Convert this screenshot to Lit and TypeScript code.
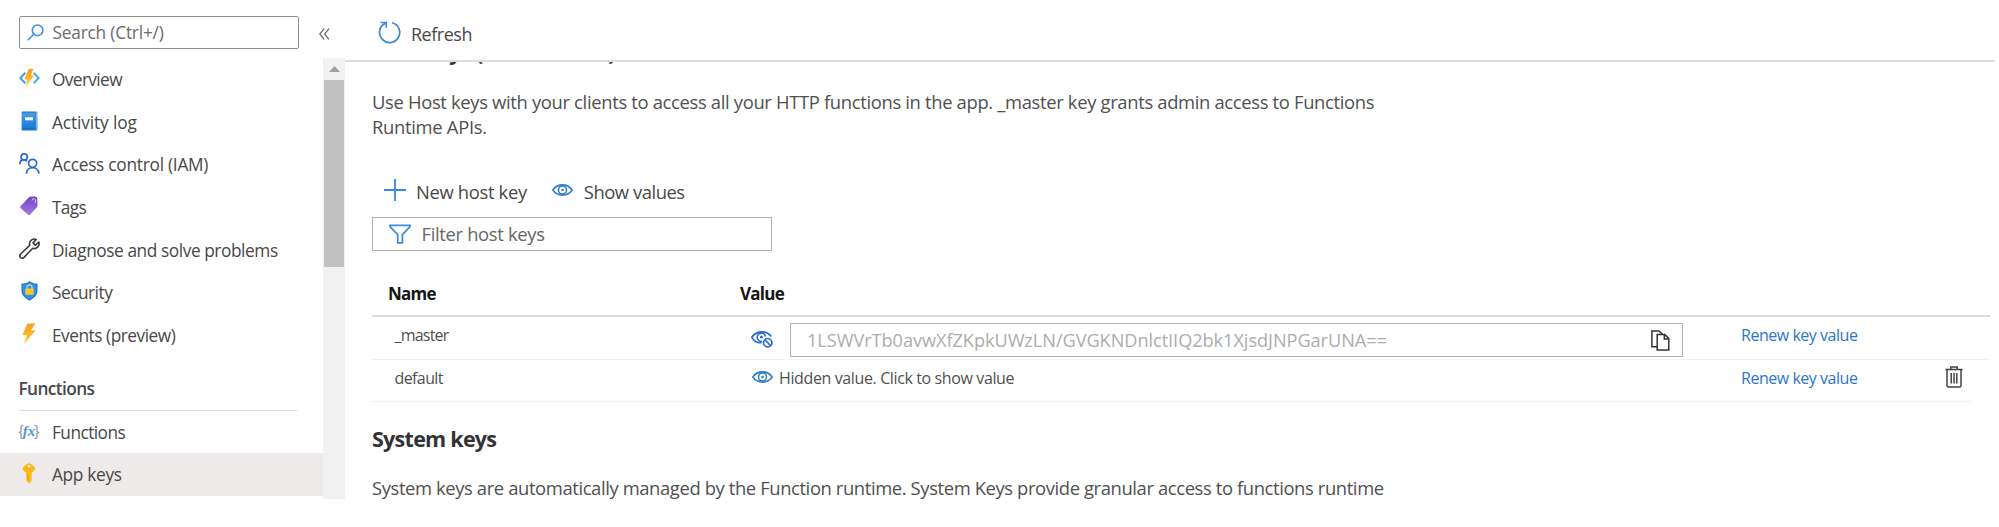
import { LitElement, html, css } from "lit";
import { customElement } from "lit/decorators.js";
import { classMap } from "lit/directives/class-map.js";
import { styleMap } from "lit/directives/style-map.js";

const text = (value: string, tracking: number) =>
  html`<span style=${styleMap({ letterSpacing: `${tracking}px` })}>${value}</span>`;

const icons = {
  search: html`<svg width="17" height="17" viewBox="0 0 17 17" fill="none" stroke="#3f8ed8" stroke-width="1.6"><circle cx="10.6" cy="6.3" r="5.3"/><path d="M6.8 10.2 .7 16.2"/></svg>`,
  overview: html`<svg width="21" height="18" viewBox="0 0 21 18"><defs><linearGradient id="g1" x2="0" y2="1"><stop stop-color="#ff9d1c"/><stop offset="1" stop-color="#ffcb2b"/></linearGradient></defs><g fill="none" stroke-width="2"><path d="M6.3 3.8 1.3 9l5 5.2" stroke="#3aa0e8"/><path d="m14.7 3.8 5 5.2-5 5.2" stroke="#3ab4ea"/></g><path d="M9.6 0h4.9l-2.9 6.2h3.7L6.2 18l2.3-7.6H5.2z" fill="url(#g1)"/></svg>`,
  log: html`<svg width="17" height="20" viewBox="0 0 17 20"><defs><linearGradient id="g2" x2="0" y2="1"><stop stop-color="#4aa0e8"/><stop offset="1" stop-color="#0f7ad8"/></linearGradient></defs><rect x=".6" y=".6" width="15.8" height="18.8" rx="1.2" fill="url(#g2)"/><path d="M.9 1.2h13.6v16.4H1" fill="none" stroke="#2467a8" stroke-width=".7"/><path d="M15.3 1.5v17" stroke="#9dc6ee" stroke-width=".9"/><rect x="4" y="6.3" width="8" height="3" fill="#fff"/></svg>`,
  iam: html`<svg width="21" height="21" viewBox="0 0 21 21" fill="none" stroke="#2a6bd0" stroke-width="1.7"><circle cx="5.2" cy="4" r="3.1"/><path d="M.8 11.2c.2-5.3 5-5.2 7.2-2.9"/><circle cx="13.6" cy="10.3" r="4"/><path d="M7.4 20.6c.6-7.8 11.7-8 12.6 0"/></svg>`,
  tag: html`<svg width="18" height="20" viewBox="0 0 18 20"><defs><linearGradient id="g3" x2="0" y2="1"><stop stop-color="#7444c8"/><stop offset="1" stop-color="#a47ade"/></linearGradient></defs><path d="M.5 10.2 8.7 1.4Q9.7.6 11 .6h4q2.2 0 2.3 2.2l.2 7.2q0 .8-.7 1.5l-7 7.5q-.8.7-1.5 0L.5 12q-.6-.9 0-1.8z" fill="url(#g3)"/><path d="M12 4.6q.4-2.2 2.4-1.8t1 3.9" fill="none" stroke="#ddcbf6" stroke-width="1"/></svg>`,
  wrench: html`<svg width="21" height="21" viewBox="0 0 21 21" fill="none" stroke="#3a3a3a" stroke-width="1.6" stroke-linejoin="round"><path d="M17.2 1.5C14 .1 10.5 2.3 10.5 5.8c0 .7.1 1.1.2 1.6L1.6 16c-2.4 2.6 1 5.6 3.4 3.4l8.7-9.1c3.6 1.2 7.3-2.2 6.2-6.2l-3.6 3-2.3-2.2z"/></svg>`,
  shield: html`<svg width="17" height="20" viewBox="0 0 17 20"><path d="M8.5 0C6.8 1.8 3.5 2.6.5 2.6V9.5c0 5.5 5 8.3 8 10.3 3-2 8-4.8 8-10.3V2.6C13.5 2.6 10.2 1.8 8.5 0z" fill="#1a76d2"/><path d="M8.5 1.6C6.8 3 4 3.7 1.8 3.9v5.6c0 4.5 4 6.9 6.7 8.7 2.7-1.8 6.7-4.2 6.7-8.7V3.9C13 3.7 10.2 3 8.5 1.6z" fill="#2f95ea"/><path d="M6 8V6.3q0-2.4 2.5-2.4T11 6.3V8" fill="none" stroke="#d8c98c" stroke-width="1.4"/><rect x="4.3" y="7.6" width="8.4" height="6.2" rx=".8" fill="#f5c92e"/></svg>`,
  bolt: html`<svg width="14" height="21" viewBox="0 0 14 21"><defs><linearGradient id="g4" x2="0" y2="1"><stop stop-color="#fb9d1e"/><stop offset="1" stop-color="#fec92c"/></linearGradient></defs><path d="M5.5.4h7.9L8.8 7.6h4.7L2 20.7l2.9-8.6H.4z" fill="url(#g4)"/></svg>`,
  key: html`<svg width="14" height="20" viewBox="0 0 14 20"><path d="M5.3.7q1.7-1 3.4 0l4 3.5q1 1.3 0 2.7L9.6 10.3v7.5L7.5 20h-1L4.3 17.8v-7.5L1.2 6.9q-1-1.4 0-2.7z" fill="#fdb913"/><circle cx="7" cy="3.4" r="1.3" fill="#fff0c0"/><path d="M6 11v6" stroke="#e39a0c" stroke-width=".9"/></svg>`,
  refresh: html`<svg width="23" height="23" viewBox="0 0 23 23" fill="none" stroke="#3c88d4" stroke-width="1.7"><path d="M14.2 1.7A10.1 10.1 0 1 1 7.4 2.3"/><path d="M2.6 1.5h5.6v5.3" stroke-width="1.6"/></svg>`,
  plus: html`<svg width="22" height="22" viewBox="0 0 22 22" stroke="#3c88d4" stroke-width="1.8"><path d="M11 0v22M0 11h22"/></svg>`,
  eye: html`<svg width="21" height="12" viewBox="0 0 21 12" fill="none" stroke="#2f7fcc"><path d="M.8 6C5.6-.8 15.4-.8 20.2 6 15.4 12.8 5.6 12.8.8 6z" stroke-width="1.6"/><circle cx="10.5" cy="6" r="4" stroke-width="1.6"/><circle cx="10.5" cy="6" r="1.3" fill="#2f7fcc" stroke="none"/></svg>`,
  eyeOff: html`<svg width="22" height="17" viewBox="0 0 22 17" fill="none" stroke="#2668d0"><path d="M10.5 11.7C6.5 12.2 3 10 .8 6.3 5.6-.7 15.4-.9 20.2 5.4" stroke-width="1.6"/><path d="M11 10.4A4.2 4.2 0 1 1 14.6 5.5" stroke-width="1.6"/><circle cx="10.4" cy="6.2" r="1.4" fill="#2668d0" stroke="none"/><circle cx="16.7" cy="11.7" r="4.2" stroke-width="1.7"/><path d="m13.8 8.8 5.8 5.8" stroke-width="1.6"/></svg>`,
  funnel: html`<svg width="22" height="20" viewBox="0 0 22 20" fill="none" stroke="#3a8edb" stroke-width="1.8"><path d="M1 1.3h20v1.3l-7.6 8v8.2H8.7v-8.2L1 2.6z"/></svg>`,
  copy: html`<svg width="19" height="21" viewBox="0 0 19 21" fill="none" stroke="#333" stroke-width="1.5"><path d="M6 16.7H.9V.9H8l3.5 3.3"/><path d="M6.2 4.6h7.6l4 4v11.5H6.2z" fill="#fff"/><path d="M13.3 4.8v4.3h4.3"/></svg>`,
  trash: html`<svg width="18" height="22" viewBox="0 0 18 22" fill="none" stroke="#444" stroke-width="1.5"><path d="M.4 3.4h17.2M5.8 3.2V.9h6.4v2.3M2 3.6v15.9q0 1.5 1.5 1.5h11q1.5 0 1.5-1.5V3.6M6.2 7v10.5M9 7v10.5M11.8 7v10.5"/></svg>`,
  fx: html`<span class="fx"><i>{</i><b>fx</b><i>}</i></span>`,
};

const resourceItems = [
  { label: "Overview", icon: icons.overview, tracking: -0.62 },
  { label: "Activity log", icon: icons.log, tracking: -0.12 },
  { label: "Access control (IAM)", icon: icons.iam, tracking: -0.26 },
  { label: "Tags", icon: icons.tag, tracking: -0.7 },
  { label: "Diagnose and solve problems", icon: icons.wrench, tracking: -0.43 },
  { label: "Security", icon: icons.shield, tracking: -0.5 },
  { label: "Events (preview)", icon: icons.bolt, tracking: -0.48 },
];
const functionItems = [
  { label: "Functions", icon: icons.fx, tracking: -0.55 },
  { label: "App keys", icon: icons.key, tracking: -0.32, active: true },
];

@customElement("side-menu")
class SideMenu extends LitElement {
  static styles = css`
    :host { display: grid; grid-template-columns: 323px 22px; grid-template-rows: 57.5px 1fr; color: #484848; font-size: 17.3px; height: 499px; }
    .top { grid-column: 1 / 3; display: flex; align-items: flex-start; padding: 16px 0 0 19px; }
    .search { box-sizing: border-box; width: 280px; height: 32.5px; border: 1.5px solid #8f8f8f; border-radius: 2px; display: flex; align-items: center; padding-left: 6.5px; gap: 9px; color: #6b6b6b; }
    .collapse { margin: 11.5px 0 0 20px; }
    .items { padding-top: .6px; }
    .item { display: flex; align-items: center; height: 42.67px; }
    .icon { width: 21px; margin: 0 12.5px 0 18.5px; display: flex; justify-content: center; padding-bottom: 3px; }
    .active { background: #edeae9; }
    .group { display: flex; align-items: center; box-sizing: border-box; height: 54.1px; margin: 0 26.5px 0 18.5px; padding-top: 10px; font-weight: 600; border-bottom: 1.5px solid #dcdcdc; }
    .track { background: #f1f1f1; display: flex; flex-direction: column; align-items: center; }
    .up { height: 22px; display: flex; align-items: center; }
    .thumb { width: 20px; height: 187px; background: #c1c1c1; }
    .fx { display: flex; align-items: center; font-size: 16.5px; line-height: 18px; color: #999; }
    .fx i { font-family: "Liberation Sans", sans-serif; font-style: normal; font-size: 15.5px; }
    .fx b { font: italic bold 15px/18px "Liberation Serif", serif; color: #4a97dc; margin: 0 -1px; }
  `;
  item(i: any) {
    return html`<div class=${classMap({ item: true, active: !!i.active })}><div class="icon">${i.icon}</div>${text(i.label, i.tracking)}</div>`;
  }
  render() {
    return html`
      <div class="top">
        <div class="search">${icons.search}${text("Search (Ctrl+/)", -0.2)}</div>
        <svg class="collapse" width="11" height="12" viewBox="0 0 11 12" fill="none" stroke="#666" stroke-width="1.2"><path d="M5.2.6.8 6l4.4 5.4M10 .6 5.6 6l4.4 5.4"/></svg>
      </div>
      <div class="items">
        ${resourceItems.map((i) => this.item(i))}
        <div class="group">${text("Functions", -0.6)}</div>
        ${functionItems.map((i) => this.item(i))}
      </div>
      <div class="track">
        <div class="up"><svg width="11" height="6" viewBox="0 0 11 6"><path d="M5.5 0 11 6H0z" fill="#a0a0a0"/></svg></div>
        <div class="thumb"></div>
      </div>`;
  }
}

@customElement("keys-panel")
class KeysPanel extends LitElement {
  static styles = css`
    :host { display: flex; flex-direction: column; height: 498.5px; overflow: hidden; color: #505050; font-size: 18.4px; }
    svg { flex: none; }
    .toolbar { box-sizing: border-box; height: 62px; flex: none; display: flex; align-items: center; gap: 10px; padding: 8.5px 0 0 33px; border-bottom: 2px solid #dedede; margin-right: 4px; font-size: 17.9px; color: #484848; }
    .toolbar svg { margin-top: -3px; }
    .body { padding-left: 27px; overflow: hidden; flex: 1; }
    h2 { margin: 0; font-size: 21.5px; line-height: 30px; font-weight: 700; color: #333; }
    .clipped { margin-top: -25px; }
    p { margin: 0; line-height: 25px; }
    .host p { margin-top: 22.4px; }
    .actions { display: flex; align-items: center; height: 30px; margin-top: 37px; padding-left: 12px; color: #484848; }
    .actions svg { margin-top: -2px; }
    .new { margin: 0 25px 0 10px; }
    .show { margin-left: 11px; }
    .filter { box-sizing: border-box; width: 400px; height: 34px; margin-top: 10.3px; border: 1.5px solid #b0b0b0; display: flex; align-items: center; padding-left: 16px; gap: 10.5px; color: #666; }
    .row { box-sizing: border-box; display: grid; grid-template-columns: 379px 38px 952px 1fr 46px; width: 1618px; height: 43px; border-bottom: 1.5px solid #f1f1f1; font-size: 16px; line-height: 22px; }
    .head { grid-template-columns: 368px 1fr; height: 66.2px; border-bottom: 2px solid #d6dbe4; font-size: 17px; font-weight: 700; color: #161616; padding-top: 32.8px; }
    .label { padding-left: 16px; }
    .last { width: 1599px; height: 42.5px; grid-template-columns: 379px 38px 952px 1fr 26px; }
    .name { padding: 6.8px 0 0 22.5px; }
    .look { padding-top: 14.4px; line-height: 0; }
    .last .look { padding: 11.4px 0 0 1px; }
    .hidden { padding-top: 6.8px; margin-left: -10px; }
    .value { box-sizing: border-box; width: 893.5px; height: 34px; margin: 6.5px 0 0 .5px; border: 1.5px solid #b4b4b4; display: flex; align-items: center; justify-content: space-between; padding: 0 12px 0 16.5px; color: #adadad; font-size: 18.2px; }
    a { color: #2b76d2; padding-top: 6.8px; }
    .trash { padding-top: 6.5px; line-height: 0; }
    .system { margin-top: 22px; }
    .system p { margin-top: 21px; white-space: nowrap; }
  `;
  render() {
    return html`
      <div class="toolbar">${icons.refresh}${text("Refresh", -0.42)}</div>
      <div class="body">
        <section class="host">
          <h2 class="clipped">${text("Host keys (all functions)", -0.6)}</h2>
          <p>${text("Use Host keys with your clients to access all your HTTP functions in the app. _master key grants admin access to Functions", -0.332)}<br />${text("Runtime APIs.", -0.3)}</p>
          <div class="actions">
            ${icons.plus}<span class="new">${text("New host key", -0.34)}</span>
            ${icons.eye}<span class="show">${text("Show values", -0.45)}</span>
          </div>
          <div class="filter">${icons.funnel}${text("Filter host keys", -0.33)}</div>
          <div class="row head">
            <div class="label">${text("Name", -0.75)}</div>
            <div>${text("Value", -0.75)}</div>
          </div>
          <div class="row">
            <div class="name">${text("_master", -0.8)}</div>
            <div class="look">${icons.eyeOff}</div>
            <div class="value">${text("1LSWVrTb0avwXfZKpkUWzLN/GVGKNDnlctIIQ2bk1XjsdJNPGarUNA==", -0.065)}${icons.copy}</div>
            <a>${text("Renew key value", -0.47)}</a>
          </div>
          <div class="row last">
            <div class="name">${text("default", -0.6)}</div>
            <div class="look">${icons.eye}</div>
            <div class="hidden">${text("Hidden value. Click to show value", -0.38)}</div>
            <a>${text("Renew key value", -0.47)}</a>
            <div class="trash">${icons.trash}</div>
          </div>
        </section>
        <section class="system">
          <h2>${text("System keys", -0.74)}</h2>
          <p>${text("System keys are automatically managed by the Function runtime. System Keys provide granular access to functions runtime", -0.385)}</p>
        </section>
      </div>`;
  }
}

@customElement("app-root")
class AppRoot extends LitElement {
  static styles = css`
    :host { display: grid; grid-template-columns: 345px 1fr; height: 527px; overflow: hidden; background: #fff; font-family: "Open Sans", "Noto Sans", sans-serif; }
  `;
  render() {
    return html`<side-menu></side-menu><keys-panel></keys-panel>`;
  }
}
